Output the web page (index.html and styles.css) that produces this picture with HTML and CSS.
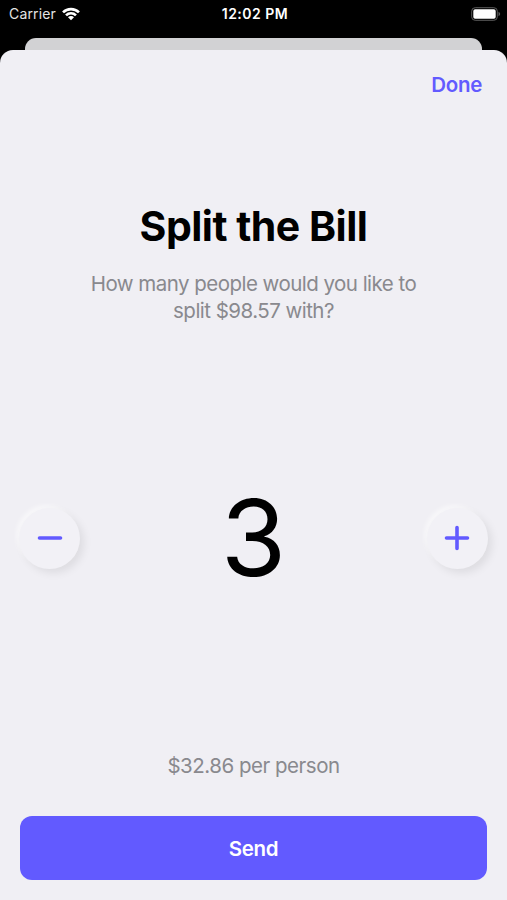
FILE: index.html
```html
<!DOCTYPE html>
<html lang="en">
<head>
    <meta charset="UTF-8">
    <meta name="viewport" content="width=device-width, initial-scale=1.0">
    <title>Split the Bill</title>
    <link rel="stylesheet" href="styles.css">
</head>
<body>
    <div class="status-bar">
        <div class="carrier">
            <span>Carrier</span>
            <svg class="wifi" viewBox="0 0 18 14">
                <path d="M0.1 4.4 A12.6 12.6 0 0 1 17.9 4.4 L16 6.3 A9.9 9.9 0 0 0 2 6.3 Z"/>
                <path d="M3.1 7.4 A8.3 8.3 0 0 1 14.9 7.4 L13 9.3 A5.6 5.6 0 0 0 5 9.3 Z"/>
                <path d="M6 10.3 A4.2 4.2 0 0 1 12 10.3 L9 13.3 Z"/>
            </svg>
        </div>
        <div class="time">12:02 PM</div>
        <div class="battery">
            <svg viewBox="0 0 31 14">
                <rect class="battery-case" x="1.7" y="0.7" width="25.6" height="12.6" rx="3.5"/>
                <rect x="3.3" y="2.2" width="22.4" height="9.6" rx="1.8"/>
                <path class="battery-tip" d="M28.5 4.7 Q30.2 5.5 30.2 7 Q30.2 8.5 28.5 9.3 Z"/>
            </svg>
        </div>
    </div>

    <div class="back-card"></div>

    <div class="sheet">
        <div class="nav">
            <button class="done-btn">Done</button>
        </div>

        <h1>Split the Bill</h1>
        <p class="question">How many people would you like to<br>split $98.57 with?</p>

        <div class="stepper">
            <button class="round-btn" aria-label="Remove person">
                <svg viewBox="0 0 26 26"><path d="M2.5 13 H23.5"/></svg>
            </button>
            <div class="count">3</div>
            <button class="round-btn" aria-label="Add person">
                <svg viewBox="0 0 26 26"><path d="M2.5 13 H23.5 M13 2.5 V23.5"/></svg>
            </button>
        </div>

        <p class="per-person">$32.86 per person</p>
        <button class="send-btn">Send</button>
    </div>
</body>
</html>
```
FILE: styles.css
```css
* {
    margin: 0;
    padding: 0;
    box-sizing: border-box;
    font-family: Inter, 'Liberation Sans', sans-serif;
}

body {
    background-color: #000;
    height: 100vh;
    display: flex;
    flex-direction: column;
    overflow: hidden;
}

button {
    border: none;
    background: none;
    cursor: pointer;
}

.status-bar {
    height: 38px;
    padding: 0 6px 11px 9px;
    display: grid;
    grid-template-columns: 1fr auto 1fr;
    align-items: center;
    color: white;
    font-size: 14px;
}

.carrier {
    display: flex;
    align-items: center;
    gap: 6px;
    letter-spacing: 0.15px;
    color: #e4e4e4;
}

.wifi {
    width: 18px;
    height: 14px;
    fill: white;
}

.time {
    font-weight: 600;
    letter-spacing: 0.5px;
}

.battery {
    display: flex;
    justify-content: flex-end;
}

.battery svg {
    width: 31px;
    height: 14px;
    fill: white;
}

.battery .battery-case {
    fill: none;
    stroke: #5c5c5c;
}

.battery .battery-tip {
    fill: #5c5c5c;
}

.back-card {
    height: 12px;
    margin: 0 25px;
    background-color: #d2d2d4;
    border-radius: 11px 11px 0 0;
}

.sheet {
    flex: 1;
    display: flex;
    flex-direction: column;
    background-color: #f0eff4;
    border-radius: 13px 13px 0 0;
    padding: 0 20px 20px;
    text-align: center;
}

.nav {
    height: 68px;
    padding-right: 5px;
    display: flex;
    align-items: center;
    justify-content: flex-end;
}

.done-btn {
    color: #625aff;
    font-size: 20.5px;
    font-weight: 600;
    letter-spacing: -0.3px;
}

h1 {
    margin-top: 83px;
    font-size: 41px;
    line-height: 50px;
    font-weight: 700;
    letter-spacing: -0.5px;
}

.question {
    margin-top: 19px;
    font-size: 20.5px;
    line-height: 27px;
    letter-spacing: -0.53px;
    color: #89898e;
}

.stepper {
    height: 120px;
    margin: 154px -1px 0 -1px;
    display: flex;
    align-items: center;
    justify-content: space-between;
}

.round-btn {
    width: 61px;
    height: 61px;
    border-radius: 50%;
    background-color: #f2f1f6;
    box-shadow: 4px 4px 8px rgba(0, 0, 0, 0.08), -3px -3px 4px rgba(255, 255, 255, 0.5);
    display: flex;
    align-items: center;
    justify-content: center;
}

.round-btn svg {
    width: 26px;
    height: 26px;
    fill: none;
    stroke: #625aff;
    stroke-width: 3.6;
    stroke-linecap: round;
}

.count {
    font-size: 106px;
    line-height: 120px;
}

.per-person {
    margin-top: auto;
    font-size: 20.5px;
    line-height: 28px;
    letter-spacing: -0.48px;
    color: #89898e;
}

.send-btn {
    height: 64px;
    margin-top: 36px;
    border-radius: 12px;
    background-color: #625aff;
    color: white;
    font-size: 20.5px;
    font-weight: 600;
    letter-spacing: -0.3px;
}
```
